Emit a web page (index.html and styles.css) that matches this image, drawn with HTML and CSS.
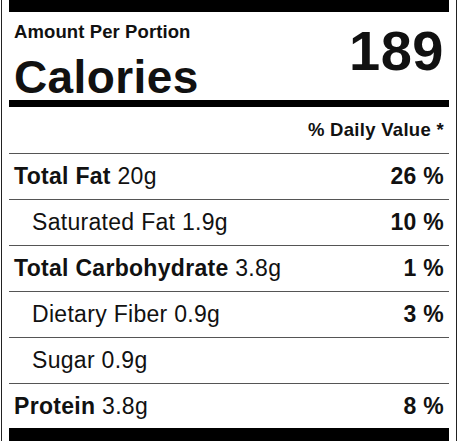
FILE: index.html
```html
<!DOCTYPE html>
<html lang="en">
<head>
  <meta charset="UTF-8" />
  <title>Nutrition Facts</title>
  <link rel="stylesheet" href="styles.css">
</head>
<body>
  <div class="label">
    <div class="bar bar-top"></div>

    <div class="header">
      <div class="header-left">
        <div class="amount">Amount Per Portion</div>
        <div class="calories">Calories</div>
      </div>
      <div class="cal-value">189</div>
    </div>

    <div class="dv-head">% Daily Value *</div>

    <div class="row">
      <span><b>Total Fat</b> 20g</span>
      <b>26 %</b>
    </div>
    <div class="row sub">
      <span>Saturated Fat 1.9g</span>
      <b>10 %</b>
    </div>
    <div class="row">
      <span><b>Total Carbohydrate</b> 3.8g</span>
      <b>1 %</b>
    </div>
    <div class="row sub">
      <span>Dietary Fiber 0.9g</span>
      <b>3 %</b>
    </div>
    <div class="row sub">
      <span>Sugar 0.9g</span>
    </div>
    <div class="row last">
      <span><b>Protein</b> 3.8g</span>
      <b>8 %</b>
    </div>

    <div class="bar bar-bottom"></div>
  </div>
</body>
</html>
```

FILE: styles.css
```css
body {
  margin: 0;
  background: #fff;
  color: #111;
  font-family: 'Liberation Sans', Arial, sans-serif;
  overflow: hidden;
}
.label {
  width: 440px;
  margin-left: 1px;
  padding: 0 7px;
  border: 1px solid #222;
  border-top: none;
}
.bar {
  background: #000;
}
.bar-top {
  height: 12px;
}
.bar-bottom {
  height: 20px;
}
.header {
  display: flex;
  justify-content: space-between;
  align-items: flex-start;
  padding: 9px 5px 0 5px;
  border-bottom: 7px solid #000;
}
.amount {
  font-size: 18.5px;
  line-height: 22px;
  font-weight: bold;
  letter-spacing: 0.1px;
}
.calories {
  margin-top: 12px;
  font-size: 46px;
  line-height: 45px;
  font-weight: bold;
  letter-spacing: 0.4px;
}
.cal-value {
  margin-top: 2px;
  font-size: 56px;
  line-height: 56px;
  font-weight: bold;
  letter-spacing: 0.5px;
}
.dv-head {
  text-align: right;
  padding: 12px 5px;
  font-size: 18.5px;
  line-height: 22px;
  font-weight: bold;
  letter-spacing: 0.3px;
  border-bottom: 1px solid #555;
}
.row {
  display: flex;
  justify-content: space-between;
  padding: 10px 5px;
  font-size: 23px;
  line-height: 25px;
  letter-spacing: 0.3px;
  border-bottom: 1px solid #555;
}
.row.sub {
  padding-left: 23px;
}
.row.last {
  padding-bottom: 9px;
  border-bottom: none;
}
```
